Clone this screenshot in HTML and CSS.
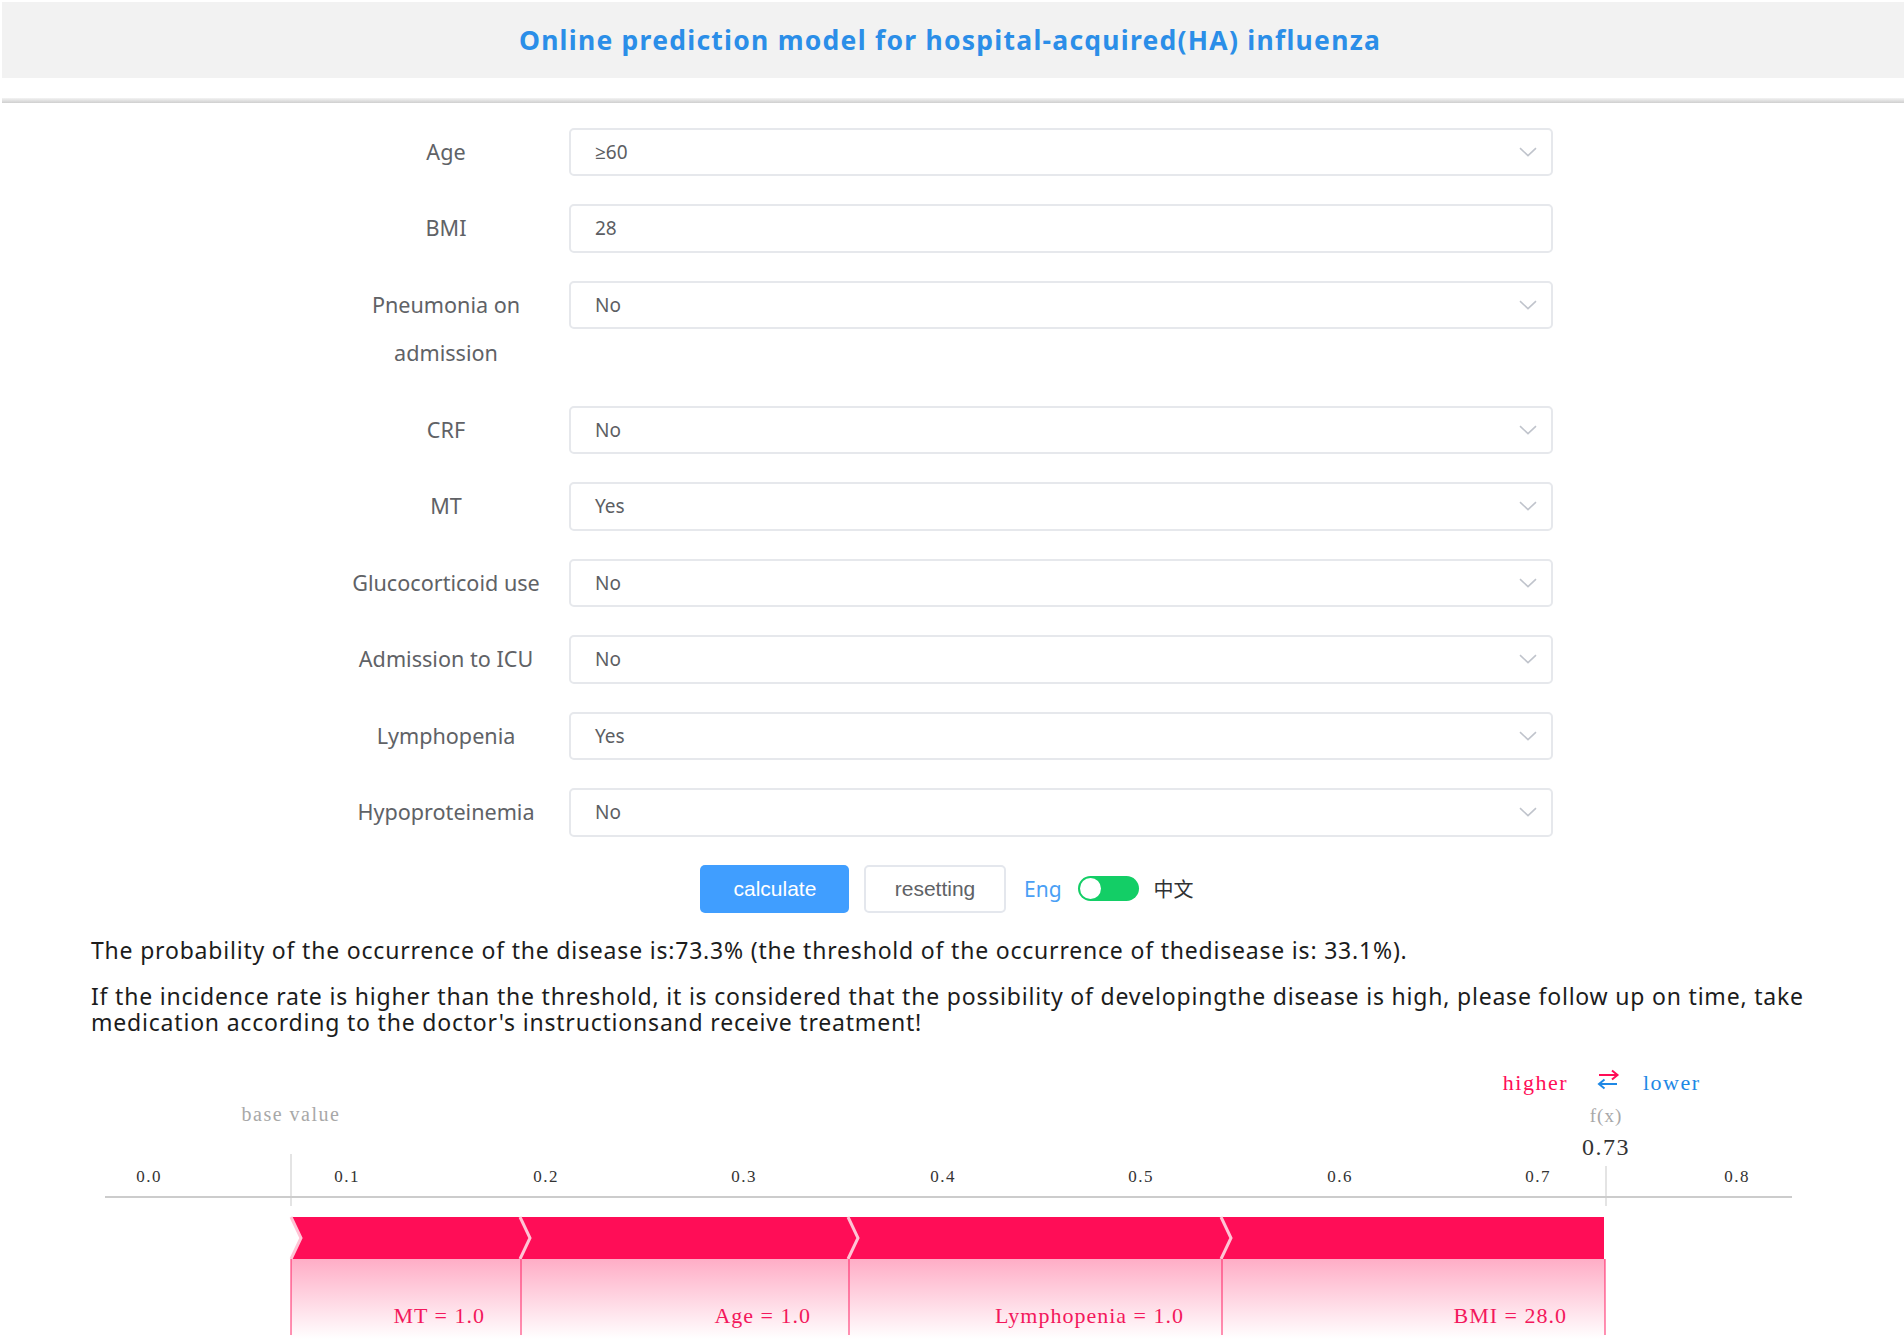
FILE: index.html
```html
<!DOCTYPE html>
<html lang="en">
<head>
<meta charset="utf-8">
<title>Online prediction model for hospital-acquired(HA) influenza</title>
<link rel="stylesheet" href="styles.css">
</head>
<body>
<header class="topbar">
  <h1 class="title">Online prediction model for hospital-acquired(HA) influenza</h1>
</header>
<div class="rule"></div>

<form class="form">
  <div class="row">
    <label class="label">Age</label>
    <div class="field"><span>≥60</span><svg class="arrow" viewBox="0 0 18 10"><path d="M1 1.2 L9 8.6 L17 1.2"/></svg></div>
  </div>
  <div class="row">
    <label class="label">BMI</label>
    <div class="field"><span>28</span></div>
  </div>
  <div class="row">
    <label class="label">Pneumonia on admission</label>
    <div class="field"><span>No</span><svg class="arrow" viewBox="0 0 18 10"><path d="M1 1.2 L9 8.6 L17 1.2"/></svg></div>
  </div>
  <div class="row">
    <label class="label">CRF</label>
    <div class="field"><span>No</span><svg class="arrow" viewBox="0 0 18 10"><path d="M1 1.2 L9 8.6 L17 1.2"/></svg></div>
  </div>
  <div class="row">
    <label class="label">MT</label>
    <div class="field"><span>Yes</span><svg class="arrow" viewBox="0 0 18 10"><path d="M1 1.2 L9 8.6 L17 1.2"/></svg></div>
  </div>
  <div class="row">
    <label class="label">Glucocorticoid use</label>
    <div class="field"><span>No</span><svg class="arrow" viewBox="0 0 18 10"><path d="M1 1.2 L9 8.6 L17 1.2"/></svg></div>
  </div>
  <div class="row">
    <label class="label">Admission to ICU</label>
    <div class="field"><span>No</span><svg class="arrow" viewBox="0 0 18 10"><path d="M1 1.2 L9 8.6 L17 1.2"/></svg></div>
  </div>
  <div class="row">
    <label class="label">Lymphopenia</label>
    <div class="field"><span>Yes</span><svg class="arrow" viewBox="0 0 18 10"><path d="M1 1.2 L9 8.6 L17 1.2"/></svg></div>
  </div>
  <div class="row">
    <label class="label">Hypoproteinemia</label>
    <div class="field"><span>No</span><svg class="arrow" viewBox="0 0 18 10"><path d="M1 1.2 L9 8.6 L17 1.2"/></svg></div>
  </div>
</form>

<div class="actions">
  <div class="btn btn-primary">calculate</div>
  <div class="btn btn-plain">resetting</div>
  <span class="lang-en">Eng</span>
  <div class="switch"><span class="knob"></span></div>
  <span class="lang-zh">中文</span>
</div>

<div class="result">
  <p>The probability of the occurrence of the disease is:73.3% (the threshold of the occurrence of thedisease is: 33.1%).</p>
  <p>If the incidence rate is higher than the threshold, it is considered that the possibility of developingthe disease is high, please follow up on time, take medication according to the doctor's instructionsand receive treatment!</p>
</div>

<div class="chart">
  <svg class="force" width="1904" height="289" viewBox="0 1050 1904 289">
    <defs>
      <linearGradient id="fade" x1="0" y1="0" x2="0" y2="1">
        <stop offset="0" stop-color="#ff0d57" stop-opacity="0.34"/>
        <stop offset="1" stop-color="#ff0d57" stop-opacity="0"/>
      </linearGradient>
    </defs>
    <g class="legend">
      <text class="higher" x="1568" y="1090" text-anchor="end">higher</text>
      <path class="arr-red" d="M1599 1075 H1617 M1612 1070.5 L1617.5 1075 L1612 1079.5"/>
      <path class="arr-blue" d="M1599 1084 H1617 M1604.5 1079.5 L1599 1084 L1604.5 1088.5"/>
      <text class="lower" x="1643" y="1090">lower</text>
    </g>
    <text class="muted" x="291" y="1121" text-anchor="middle">base value</text>
    <text class="muted fx" x="1606" y="1122" text-anchor="middle">f(x)</text>
    <text class="out" x="1606" y="1155" text-anchor="middle">0.73</text>

    <line class="guide" x1="291" y1="1154" x2="291" y2="1206"/>
    <line class="guide" x1="1606" y1="1166" x2="1606" y2="1206"/>

    <g class="ticks" text-anchor="middle">
      <text x="149" y="1182">0.0</text>
      <text x="347" y="1182">0.1</text>
      <text x="546" y="1182">0.2</text>
      <text x="744" y="1182">0.3</text>
      <text x="943" y="1182">0.4</text>
      <text x="1141" y="1182">0.5</text>
      <text x="1340" y="1182">0.6</text>
      <text x="1538" y="1182">0.7</text>
      <text x="1737" y="1182">0.8</text>
    </g>
    <line class="axis" x1="105" y1="1197" x2="1792" y2="1197"/>

    <rect x="291" y="1259" width="1314" height="80" fill="url(#fade)"/>
    <polygon class="bar" points="291,1217 1604,1217 1604,1259 291,1259 301,1238"/>
    <polyline class="chev" points="291,1217 301,1238 291,1259"/>
    <polyline class="chev" points="520,1217 530,1238 520,1259"/>
    <polyline class="chev" points="848,1217 858,1238 848,1259"/>
    <polyline class="chev" points="1221,1217 1231,1238 1221,1259"/>

    <line class="div" x1="291" y1="1259" x2="291" y2="1335"/>
    <line class="div" x1="521" y1="1259" x2="521" y2="1335"/>
    <line class="div" x1="849" y1="1259" x2="849" y2="1335"/>
    <line class="div" x1="1222" y1="1259" x2="1222" y2="1335"/>
    <line class="div" x1="1605" y1="1259" x2="1605" y2="1335"/>

    <g class="labels" text-anchor="end">
      <text x="485" y="1323">MT = 1.0</text>
      <text x="811" y="1323">Age = 1.0</text>
      <text x="1184" y="1323">Lymphopenia = 1.0</text>
      <text x="1567" y="1323">BMI = 28.0</text>
    </g>
  </svg>
</div>
</body>
</html>
```
FILE: styles.css
```css
* { box-sizing: border-box; }
html, body { margin: 0; padding: 0; background: #ffffff; }
body {
  font-family: "Noto Sans", "Open Sans", sans-serif;
  color: #303133;
  overflow: hidden;
}

.topbar {
  margin: 2px 0 0 2px;
  height: 76px;
  background: #f2f2f2;
  display: flex;
  align-items: center;
  justify-content: center;
}
.title {
  margin: 0 0 0 -6px;
  font-size: 26.5px;
  font-weight: 700;
  letter-spacing: 1.25px;
  color: #2b8ee8;
}
.rule {
  margin: 20px 0 0 2px;
  height: 5px;
  background: linear-gradient(#f3f3f3, #dadada 70%, #cfcfcf);
}

.form {
  margin: 24.5px 0 0 340px;
  width: 1213px;
}
.row {
  display: grid;
  grid-template-columns: 212px 1fr;
  column-gap: 17px;
  align-items: start;
  margin-bottom: 28px;
}
.label {
  font-size: 21.6px;
  line-height: 48.5px;
  color: #606266;
  text-align: center;
}
.field {
  height: 48.5px;
  border: 2px solid #e6e8ec;
  border-radius: 5px;
  display: flex;
  align-items: center;
  justify-content: space-between;
  padding: 0 14px 0 24px;
  font-size: 19px;
  color: #5c5e63;
}
.arrow { width: 18px; height: 10px; }
.arrow path { fill: none; stroke: #c0c4cc; stroke-width: 1.6; }

.actions {
  display: flex;
  align-items: center;
  justify-content: center;
  height: 48.5px;
  padding-right: 10px;
}
.btn {
  height: 48.5px;
  border-radius: 5px;
  font-family: "Liberation Sans", Arial, sans-serif;
  font-size: 21px;
  display: flex;
  align-items: center;
  justify-content: center;
}
.btn-primary { width: 149px; background: #409eff; color: #ffffff; }
.btn-plain {
  width: 142px;
  margin-left: 14.6px;
  background: #ffffff;
  border: 2px solid #e4e7ed;
  color: #606266;
}
.lang-en { margin-left: 18px; font-size: 21px; color: #4a9ff5; }
.switch {
  margin-left: 16px;
  width: 61px;
  height: 25px;
  border-radius: 13px;
  background: #13ce66;
  display: flex;
  align-items: center;
  padding: 0 2px;
}
.knob { width: 21px; height: 21px; border-radius: 50%; background: #ffffff; }
.lang-zh {
  margin-left: 15px;
  font-family: "Noto Sans CJK SC", "Noto Sans", sans-serif;
  font-size: 20px;
  color: #303133;
}

.result {
  margin-top: 25px;
  padding: 0 91px;
  font-size: 23px;
  line-height: 25.5px;
  letter-spacing: 0.8px;
  color: #1c1c1c;
}
.result p { margin: 0 0 20.8px; }
.result p:last-child { margin-bottom: 0; }

.chart { margin-top: 14.7px; }
.force { display: block; font-family: "Liberation Serif", "Times New Roman", serif; }
.higher { fill: #ff0d57; font-size: 22px; letter-spacing: 1.5px; }
.lower { fill: #1e88e5; font-size: 22px; letter-spacing: 1.5px; }
.arr-red { fill: none; stroke: #ff0d57; stroke-width: 2; }
.arr-blue { fill: none; stroke: #1e88e5; stroke-width: 2; }
.muted { fill: #a8a8a8; font-size: 20px; letter-spacing: 1.5px; }
.fx { font-size: 19px; letter-spacing: 1px; }
.out { fill: #333333; font-size: 24px; letter-spacing: 1.5px; }
.guide { stroke: #e4e4e4; stroke-width: 2; }
.ticks text { fill: #333333; font-size: 17px; letter-spacing: 1.5px; }
.axis { stroke: #cccccc; stroke-width: 2; }
.bar { fill: #ff0d57; }
.chev { fill: none; stroke: #ffc4d5; stroke-width: 3; }
.div { stroke: #ff0d57; stroke-opacity: 0.45; stroke-width: 2; }
.labels text { fill: #f3185c; font-size: 22px; letter-spacing: 1px; }
```
